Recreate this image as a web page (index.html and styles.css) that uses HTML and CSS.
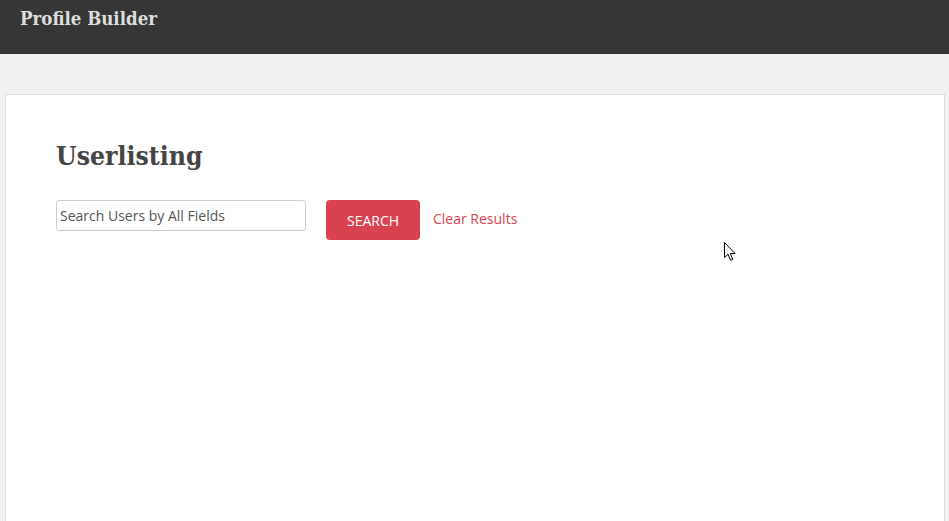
FILE: index.html
```html
<!DOCTYPE html>
<html>
<head>
	<meta charset="UTF-8">
	<title>Userlisting - Profile Builder</title>
	<link rel="stylesheet" href="styles.css">
</head>
<body>
	<div class="top-bar">
		<span class="site-title">Profile Builder</span>
	</div>
	<div class="page">
		<div class="card">
			<h1 class="entry-title">Userlisting</h1>
			<form class="search-form" onsubmit="return false;">
				<input class="search-input" type="text" placeholder="Search Users by All Fields">
				<button class="search-btn" type="submit">SEARCH</button>
				<a class="clear-link" href="#">Clear Results</a>
			</form>
		</div>
	</div>
	<svg class="cursor" width="13" height="20" viewBox="0 0 13 20">
		<path d="M0.5 0.5 L0.5 15.5 L4 12.2 L6.6 18.3 L8.8 17.4 L6.3 11.5 L11 11.5 Z" fill="#fff" stroke="#000" stroke-width="1"/>
	</svg>
</body>
</html>
```
FILE: styles.css
```css
body{
	margin: 0;
	background: #f1f1f1;
	font-family: 'Open Sans', 'Liberation Sans', sans-serif;
}
.top-bar{
	height: 54px;
	background: #363636;
	padding: 0 20px;
	box-sizing: border-box;
}
.site-title{
	display: inline-block;
	margin-top: 8px;
	font-family: 'DejaVu Serif Condensed', 'DejaVu Serif', serif;
	font-weight: bold;
	font-size: 18.5px;
	color: #dedede;
}
.page{
	padding: 40px 4px 0 5px;
}
.card{
	background: #fff;
	border: 1px solid #dcdcdc;
	border-bottom: none;
	height: 426px;
	padding: 0 50px;
}
.entry-title{
	margin: 45px 0 29px;
	font-family: 'DejaVu Serif Condensed', 'DejaVu Serif', serif;
	font-weight: bold;
	font-size: 26.3px;
	color: #444;
}
.search-form{
	display: flex;
	align-items: flex-start;
}
.search-input{
	width: 250px;
	height: 31px;
	box-sizing: border-box;
	padding: 0 3px;
	border: 1px solid #ccc;
	border-radius: 3px;
	font-family: 'Open Sans', sans-serif;
	font-size: 14px;
	color: #555;
}
.search-input::placeholder{
	color: #555;
}
.search-btn{
	margin-left: 20px;
	width: 94px;
	height: 40px;
	background: #d9434f;
	border: none;
	border-radius: 4px;
	color: #fff;
	font-family: 'Open Sans', sans-serif;
	font-size: 14px;
	cursor: pointer;
}
.clear-link{
	margin-left: 13px;
	margin-top: 9px;
	font-size: 14px;
	color: #d9434f;
	text-decoration: none;
}
.cursor{
	position: absolute;
	left: 724px;
	top: 242px;
}
```
